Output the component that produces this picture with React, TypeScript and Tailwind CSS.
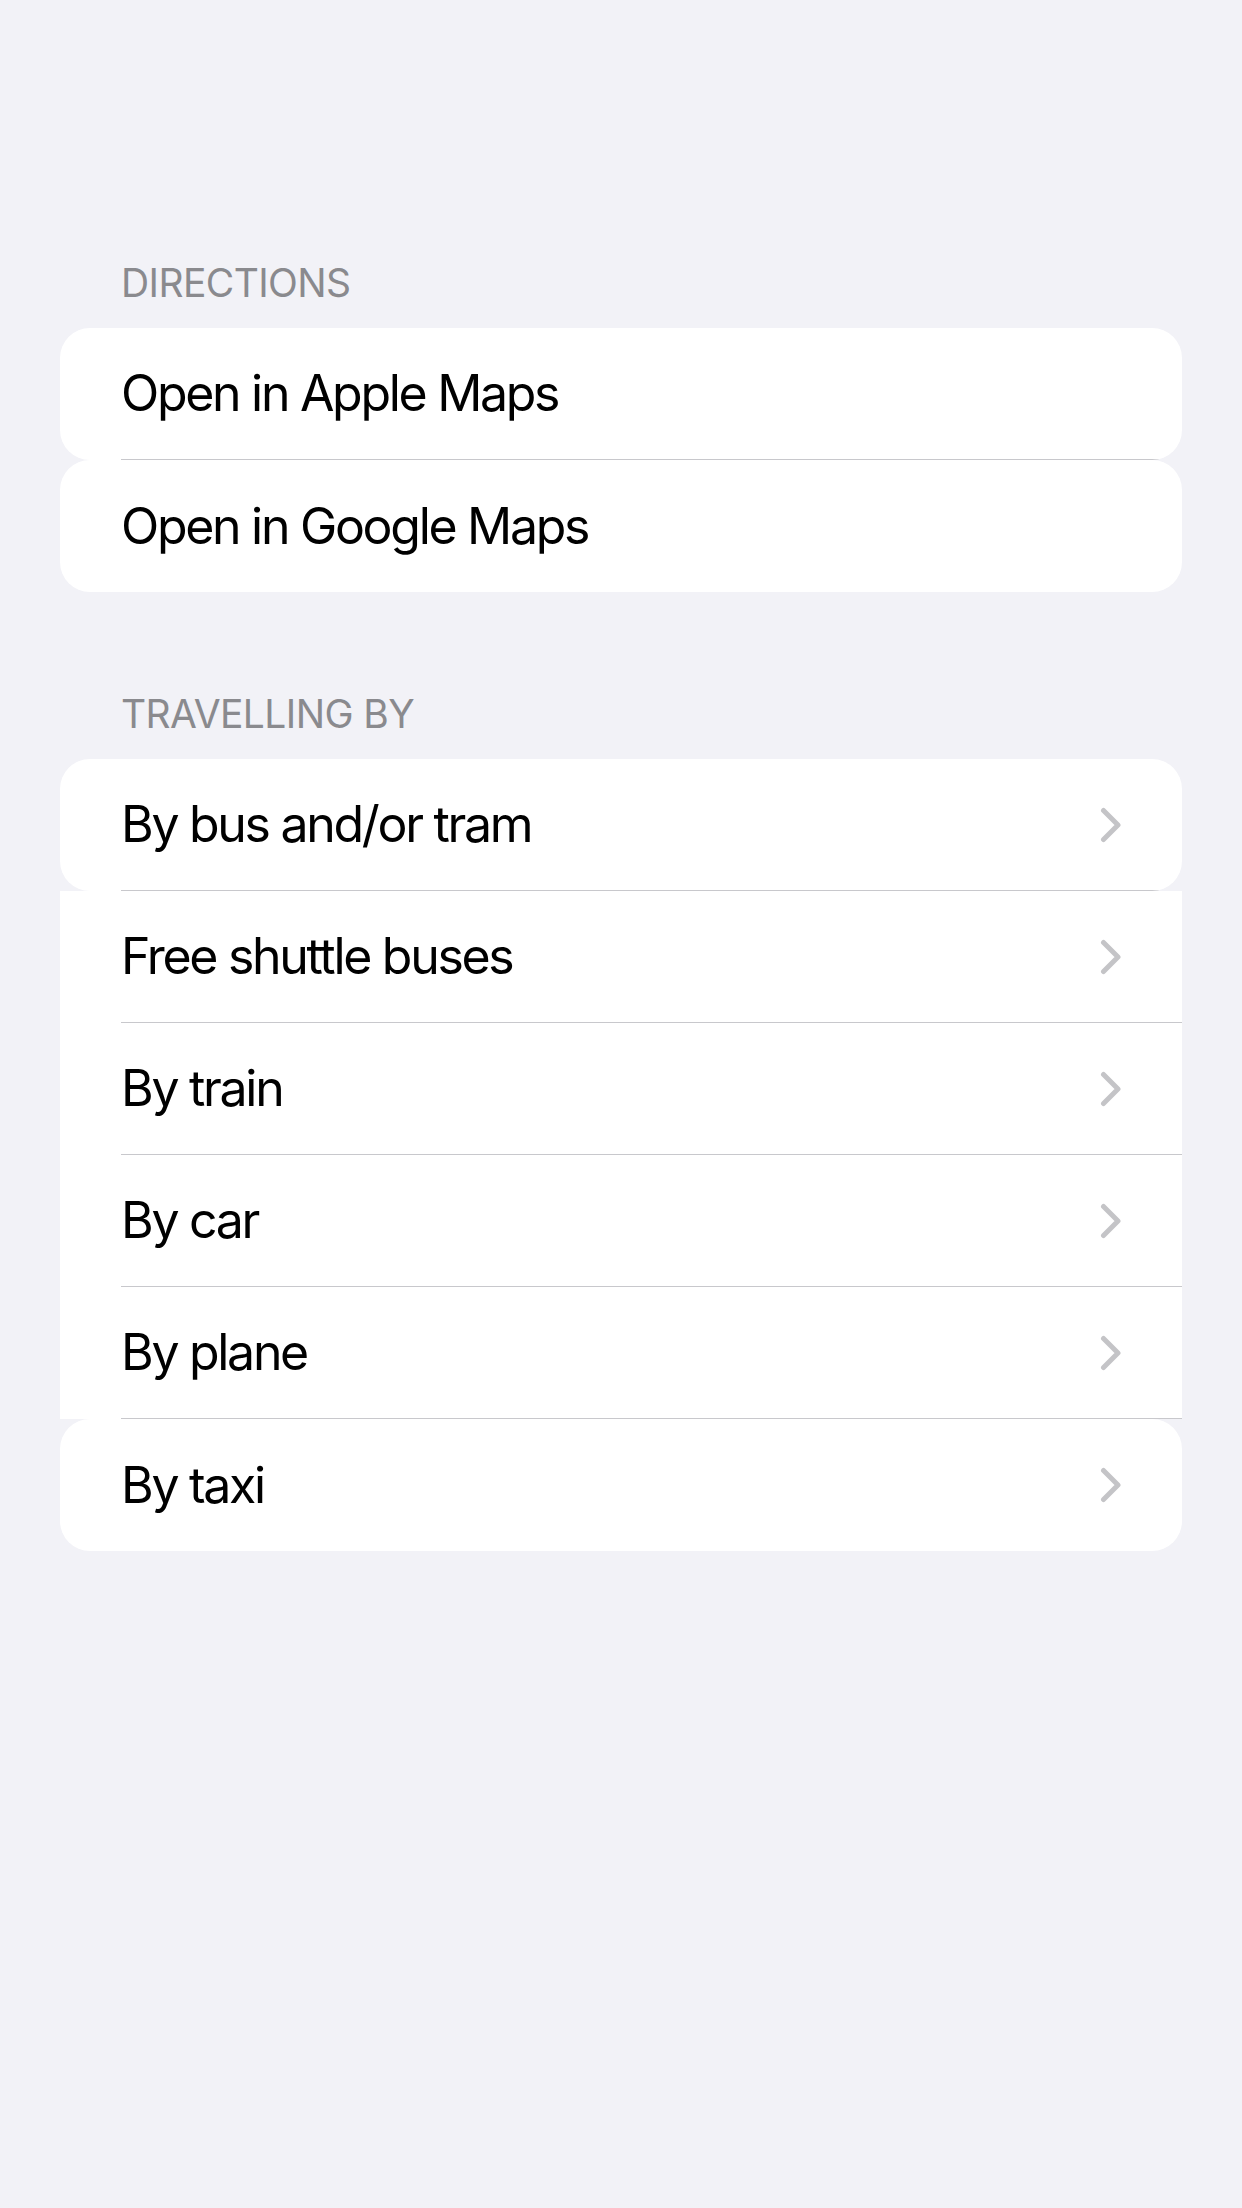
import { Fragment } from "react"

type Row = { label: string; chevron?: boolean }

const directions: Row[] = [{ label: "Open in Apple Maps" }, { label: "Open in Google Maps" }]

const travelling: Row[] = [
  { label: "By bus and/or tram", chevron: true },
  { label: "Free shuttle buses", chevron: true },
  { label: "By train", chevron: true },
  { label: "By car", chevron: true },
  { label: "By plane", chevron: true },
  { label: "By taxi", chevron: true },
]

function Chevron() {
  return (
    <svg width="22" height="36" viewBox="0 0 22 36" fill="none" className="shrink-0">
      <polyline
        points="3.5,3.5 18,18 3.5,32.5"
        stroke="#c4c4c7"
        strokeWidth="5"
        strokeLinecap="round"
        strokeLinejoin="round"
      />
    </svg>
  )
}

function Section({ title, rows }: { title: string; rows: Row[] }) {
  return (
    <section>
      <h2 className="pl-[121px] text-[39px] leading-[46px] tracking-[-0.6px] text-[#8a8a8e] uppercase mb-[22px]">
        {title}
      </h2>
      <div className="mx-[60px]">
        {rows.map((row, i) => {
          // first and last rows are rounded on every corner, middle rows are square
          const rounded = i === 0 || i === rows.length - 1
          return (
            <div
              key={row.label}
              className={
                rounded
                  ? "h-[132px] bg-white pl-[61px] flex rounded-[30px] overflow-hidden"
                  : "h-[132px] bg-white pl-[61px] flex"
              }
            >
              <div
                className={
                  i < rows.length - 1
                    ? "flex-1 flex items-center justify-between pr-[60px] border-b border-[#c8c8cc]"
                    : "flex-1 flex items-center justify-between pr-[60px]"
                }
              >
                <span className="text-[50px] text-black tracking-[-2.3px]">{row.label}</span>
                {row.chevron && <Chevron />}
              </div>
            </div>
          )
        })}
      </div>
    </section>
  )
}

export default function App() {
  return (
    <div className="min-h-[2208px] bg-[#f2f2f7] pt-[260px] font-['Inter',sans-serif]">
      <Section title="Directions" rows={directions} />
      <div className="h-[99px]" />
      <Section title="Travelling by" rows={travelling} />
    </div>
  )
}
